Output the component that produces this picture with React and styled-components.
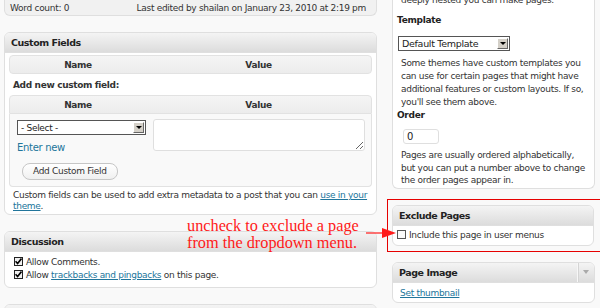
import styled, { createGlobalStyle } from 'styled-components';

const GlobalStyle = createGlobalStyle`
    html, body {
        margin: 0;
        padding: 0;
        background: #f9f9f9;
    }
    body {
        width: 600px;
        height: 308px;
        overflow: hidden;
        font-family: "DejaVu Sans", Verdana, sans-serif;
        font-size: 9px;
        letter-spacing: -0.3px;
        color: #333;
    }
`;

const Page = styled.div`
    position: relative;
    display: flex;
    align-items: flex-start;
    gap: 15px;
    padding-left: 4px;
    width: 600px;
    height: 308px;
    overflow: hidden;
    box-sizing: border-box;
`;

const LeftCol = styled.div`
    width: 373px;
    flex: none;
    display: flex;
    flex-direction: column;
`;

const RightCol = styled.div`
    width: 203px;
    flex: none;
    display: flex;
    flex-direction: column;
`;

const WordBar = styled.div`
    height: 15px;
    display: flex;
    align-items: center;
    justify-content: space-between;
    padding: 0 10px 0 5px;
    background: #f1f1f1;
    border: 1px solid #dfdfdf;
    border-top: none;
    border-radius: 0 0 6px 6px;
`;

const Panel = styled.div`
    margin-top: ${(p) => p.$gap || 0}px;
    background: #fff;
    border: 1px solid #dfdfdf;
    border-radius: 6px;
    ${(p) => p.$cutTop && 'border-top: none; border-radius: 0 0 6px 6px;'}
    overflow: hidden;
`;

const Header = styled.div`
    height: 19px;
    display: flex;
    align-items: center;
    justify-content: space-between;
    padding-left: 6px;
    background: linear-gradient(to bottom, #f4f4f4, #dcdcdc);
    border-bottom: 1px solid #dfdfdf;
    font-weight: bold;
    font-size: 9.5px;
    letter-spacing: -0.45px;
    color: #222;
`;

const Handle = styled.div`
    width: 16px;
    height: 19px;
    display: flex;
    align-items: center;
    justify-content: center;
    border-left: 1px solid #f7f7f7;
    box-shadow: inset 1px 0 0 #d4d4d4;
    &::after {
        content: '';
        border-left: 3px solid transparent;
        border-right: 3px solid transparent;
        border-top: 4px solid #aaa;
    }
`;

const Body = styled.div`
    padding: ${(p) => p.$pad || '3px 4px 4px'};
`;

const TableHead = styled.div`
    display: grid;
    grid-template-columns: 136px 1fr;
    height: 17px;
    align-items: center;
    text-align: center;
    font-weight: bold;
    letter-spacing: -0.35px;
    background: linear-gradient(to bottom, #f5f5f5, #ececec);
    border: 1px solid #e2e2e2;
    border-radius: ${(p) => (p.$open ? '4px 4px 0 0' : '4px')};
`;

const AddLabel = styled.div`
    height: 21px;
    display: flex;
    align-items: center;
    padding-left: 4px;
    font-weight: bold;
    letter-spacing: -0.35px;
`;

const NewMeta = styled.div`
    display: grid;
    grid-template-columns: 136px 1fr;
    background: #f9f9f9;
    border: 1px solid #e2e2e2;
    border-top: none;
    border-radius: 0 0 4px 4px;
    padding-bottom: 6px;
`;

const Cell = styled.div`
    padding: ${(p) => p.$pad};
    display: flex;
    flex-direction: column;
    align-items: flex-start;
`;

const Select = styled.div`
    width: ${(p) => p.$w}px;
    height: 13px;
    display: flex;
    align-items: center;
    justify-content: space-between;
    box-sizing: content-box;
    background: #fff;
    border: 1px solid #555;
    padding-left: 3px;
    color: #222;
    font-size: ${(p) => p.$fs || 9}px;
`;

const SelectBtn = styled.span`
    width: 11px;
    height: 11px;
    margin-right: 1px;
    display: flex;
    align-items: center;
    justify-content: center;
    background: #d4d0c8;
    border: 1px solid;
    border-color: #fff #666 #666 #fff;
    box-sizing: border-box;
    &::after {
        content: '';
        border-left: 3px solid transparent;
        border-right: 3px solid transparent;
        border-top: 3px solid #000;
    }
`;

const Link = styled.a`
    color: #21759b;
    text-decoration: ${(p) => (p.$plain ? 'none' : 'underline')};
    font-size: ${(p) => p.$fs || 9}px;
`;

const EnterNew = styled(Link)`
    margin-top: 7px;
    line-height: 11px;
`;

const TextArea = styled.textarea`
    width: 212px;
    height: 32px;
    margin: 0;
    padding: 2px;
    box-sizing: border-box;
    border: 1px solid #dfdfdf;
    border-radius: 3px;
    background: #fff;
    resize: both;
    font: inherit;
`;

const ButtonRow = styled.div`
    grid-column: 1 / 3;
    padding: 10px 0 0 12px;
`;

const Button = styled.button`
    height: 17px;
    padding: 0 10px;
    border: 1px solid #c6c6c6;
    border-radius: 8px;
    background: linear-gradient(to bottom, #fff, #f0f0f0);
    font: inherit;
    letter-spacing: -0.3px;
    color: #333;
    line-height: 15px;
`;

const Text = styled.p`
    margin: ${(p) => p.$m || 0};
    padding-left: ${(p) => p.$indent || 0}px;
    line-height: ${(p) => p.$lh || 11}px;
    font-weight: ${(p) => (p.$bold ? 'bold' : 'normal')};
    color: ${(p) => (p.$bold ? '#222' : '#333')};
`;

const CheckRow = styled.label`
    display: flex;
    align-items: center;
    gap: 3px;
    height: ${(p) => p.$h || 13}px;
`;

const Box = styled.span`
    width: 9px;
    height: 9px;
    box-sizing: border-box;
    border: 1px solid ${(p) => (p.$checked ? '#222' : '#555')};
    background: ${(p) => (p.$checked ? '#f0f0f0' : '#fafafa')};
    display: flex;
    align-items: center;
    justify-content: center;
    flex: none;
`;

const NumberInput = styled.div`
    width: 31px;
    height: 13px;
    margin: 8px 0 0 6px;
    padding-left: 3px;
    display: flex;
    align-items: center;
    background: #fff;
    border: 1px solid #dfdfdf;
    border-radius: 3px;
    font-size: 10px;
    color: #222;
`;

const RedFrame = styled.div`
    margin: 10px -12px 0 -5px;
    padding: 5px 12px 5px 4px;
    border: 1px solid #e60000;
`;

const Note = styled.div`
    position: absolute;
    left: 187px;
    top: 217px;
    font-family: "Liberation Serif", "Times New Roman", serif;
    font-size: 16.3px;
    letter-spacing: 0;
    line-height: 17px;
    color: #ff1a1a;
    white-space: nowrap;
`;

const Arrow = styled.svg`
    position: absolute;
    left: 366px;
    top: 227px;
`;

function Check() {
    return (
        <svg width="7" height="7" viewBox="0 0 7 7">
            <path d="M0.5 3.2 L2.6 5.6 L6.5 0.6" fill="none" stroke="#000" strokeWidth="1.6" />
        </svg>
    );
}

export default function App() {
    return (
        <>
            <GlobalStyle />
            <Page>
                <LeftCol>
                    <WordBar>
                        <span>Word count: 0</span>
                        <span>Last edited by shailan on January 23, 2010 at 2:19 pm</span>
                    </WordBar>

                    <Panel $gap={16}>
                        <Header>Custom Fields</Header>
                        <Body $pad="2px 4px 2px">
                            <TableHead>
                                <span>Name</span>
                                <span>Value</span>
                            </TableHead>
                            <AddLabel>Add new custom field:</AddLabel>
                            <TableHead $open>
                                <span>Name</span>
                                <span>Value</span>
                            </TableHead>
                            <NewMeta>
                                <Cell $pad="6px 7px 0">
                                    <Select $w={124}>
                                        <span>- Select -</span>
                                        <SelectBtn />
                                    </Select>
                                    <EnterNew $plain $fs={10}>Enter new</EnterNew>
                                </Cell>
                                <Cell $pad="5px 7px 0">
                                    <TextArea />
                                </Cell>
                                <ButtonRow>
                                    <Button>Add Custom Field</Button>
                                </ButtonRow>
                            </NewMeta>
                            <Text $m="3px 0 0" $indent={4}>
                                Custom fields can be used to add extra metadata to a post that you can{' '}
                                <Link>use in your theme</Link>.
                            </Text>
                        </Body>
                    </Panel>

                    <Panel $gap={16}>
                        <Header>Discussion</Header>
                        <Body $pad="3px 9px 6px">
                            <CheckRow>
                                <Box $checked>
                                    <Check />
                                </Box>
                                Allow Comments.
                            </CheckRow>
                            <CheckRow>
                                <Box $checked>
                                    <Check />
                                </Box>
                                <span>
                                    Allow <Link>trackbacks and pingbacks</Link> on this page.
                                </span>
                            </CheckRow>
                        </Body>
                    </Panel>

                    <Panel $gap={16}>
                        <Header>&nbsp;</Header>
                    </Panel>
                </LeftCol>

                <RightCol>
                    <Panel $cutTop style={{ marginTop: -6 }}>
                        <Body $pad="0 4px 1px">
                            <Text $lh={13} $indent={4}>deeply nested you can make pages.</Text>
                            <Text $bold $lh={12} $m="7px 0 0">Template</Text>
                            <div style={{ marginTop: 10, paddingLeft: 1 }}>
                                <Select $w={107} $fs={9.5}>
                                    <span>Default Template</span>
                                    <SelectBtn />
                                </Select>
                            </div>
                            <Text $lh={13} $m="6px 0 0" $indent={4}>
                                Some themes have custom templates you can use for certain pages that might have
                                additional features or custom layouts. If so, you'll see them above.
                            </Text>
                            <Text $bold $lh={12}>Order</Text>
                            <NumberInput>0</NumberInput>
                            <Text $lh={12.5} $m="5px 0 0" $indent={4}>
                                Pages are usually ordered alphabetically, but you can put a number above to
                                change the order pages appear in.
                            </Text>
                        </Body>
                    </Panel>

                    <RedFrame>
                        <Panel>
                            <Header>Exclude Pages</Header>
                            <Body $pad="3px 4px 4px">
                                <CheckRow $h={12}>
                                    <Box />
                                    Include this page in user menus
                                </CheckRow>
                            </Body>
                        </Panel>
                    </RedFrame>

                    <Panel $gap={10}>
                        <Header>
                            Page Image
                            <Handle />
                        </Header>
                        <Body $pad="4px 7px 3px">
                            <Link style={{ lineHeight: '12px' }}>Set thumbnail</Link>
                        </Body>
                    </Panel>
                </RightCol>

                <Note>
                    uncheck to exclude a page
                    <br />
                    from the dropdown menu.
                </Note>
                <Arrow width="32" height="12" viewBox="0 0 32 12">
                    <line x1="0" y1="6" x2="18" y2="6" stroke="#ff1a1a" strokeWidth="1.2" />
                    <polygon points="16,1 30,6 16,11" fill="#ff1a1a" />
                </Arrow>
            </Page>
        </>
    );
}
